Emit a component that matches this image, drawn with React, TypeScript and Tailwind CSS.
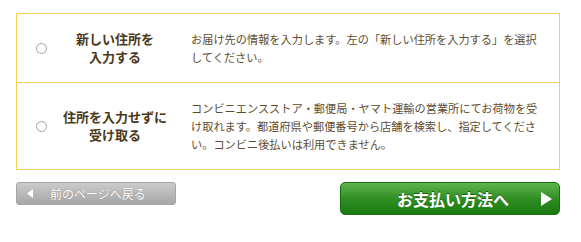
import React from "react";

const font = { fontFamily: '"Noto Sans CJK JP", "Noto Sans", sans-serif' };

const options = [
  {
    label: ["新しい住所を", "入力する"],
    desc: "お届け先の情報を入力します。左の「新しい住所を入力する」を選択してください。",
  },
  {
    label: ["住所を入力せずに", "受け取る"],
    desc: "コンビニエンスストア・郵便局・ヤマト運輸の営業所にてお荷物を受け取れます。都道府県や郵便番号から店舗を検索し、指定してください。コンビニ後払いは利用できません。",
  },
];

export default function App() {
  return (
    <div className="min-h-[242px] w-[581px] bg-white pt-[13px]" style={font}>
      <div className="ml-4 w-[544px] border border-[#fbd05a]">
        {options.map((o, i) => (
          <div
            key={i}
            className={`flex items-center py-4 ${i > 0 ? "border-t border-[#fbd05a]" : ""}`}
          >
            <div className="flex w-[46px] justify-center pl-[3px]">
              <span className="block h-[11px] w-[11px] rounded-full border border-[#a0a0a0] bg-white" />
            </div>
            <div className="w-[104px] text-center text-[13px] font-bold leading-[18px] text-[#4a3819]">
              {o.label.map((l) => (
                <div key={l}>{l}</div>
              ))}
            </div>
            <div className="ml-6 w-[352px] text-[11.2px] leading-[18px] text-[#5e4c30]">
              {o.desc}
            </div>
          </div>
        ))}
      </div>

      <div className="ml-4 mt-[12px] flex w-[544px] items-start justify-between">
        <button className="flex h-[23px] w-[160px] items-center rounded-[3px] border border-[#a5a5a5] bg-gradient-to-b from-[#cbcbcb] to-[#a6a6a6] pl-[10px] text-[12px] text-white [text-shadow:0_0_1px_#7a7a7a]">
          <svg width="6" height="9" viewBox="0 0 6 9" className="mr-[17px]">
            <path d="M6 0 L0 4.5 L6 9 Z" fill="#ffffff" />
          </svg>
          <span>前のページへ戻る</span>
        </button>

        <button className="relative flex h-[33px] w-[220px] items-center justify-center rounded-[5px] border border-[#1c6c14] bg-gradient-to-b from-[#5fb54e] via-[#2f8f22] to-[#1a7811] text-[16px] font-bold text-white">
          <span className="ml-[6px] [text-shadow:0_-1px_0_#1a5e12]">お支払い方法へ</span>
          <svg width="11" height="14" viewBox="0 0 11 14" className="absolute right-[7px] top-[9px]">
            <path d="M0 0 L11 7 L0 14 Z" fill="#ffffff" />
          </svg>
        </button>
      </div>
    </div>
  );
}
